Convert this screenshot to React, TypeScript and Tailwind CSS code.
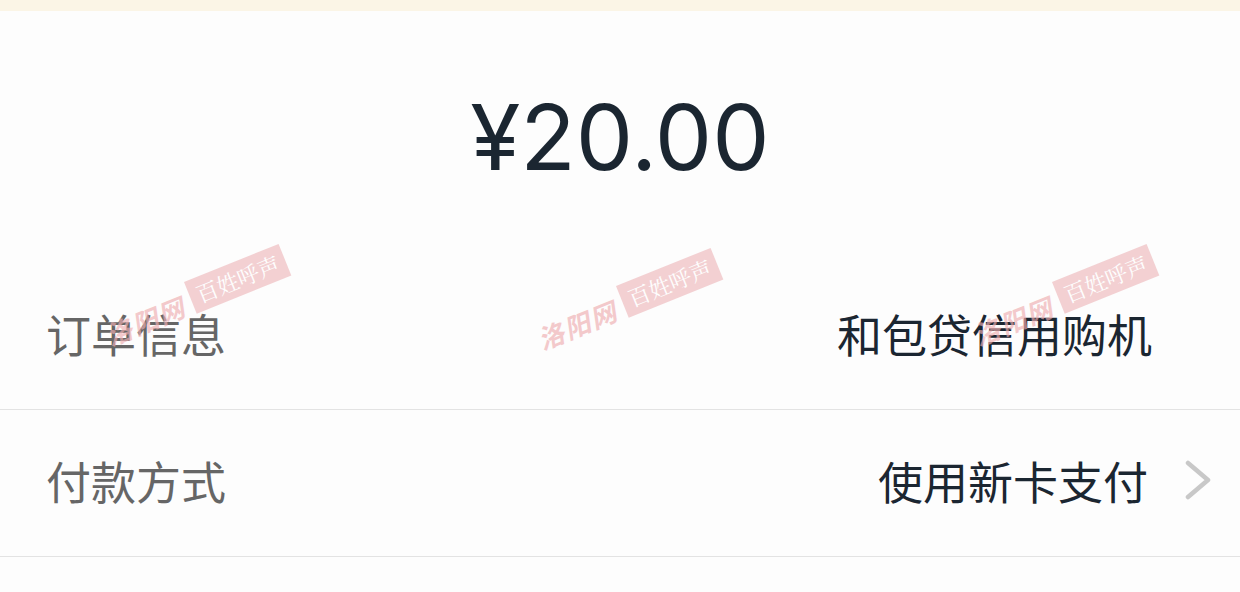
import React from "react";

const cjk = { fontFamily: '"Noto Sans CJK SC", "Noto Sans", sans-serif' };

const Watermark: React.FC<{ left: number; top: number }> = ({ left, top }) => {
    return (
        <div
            className="absolute flex items-end gap-2 pointer-events-none -rotate-[22deg] opacity-65"
            style={{ left, top }}
        >
            <span className="text-[26px] italic font-bold leading-none tracking-[2px] text-[#efaeb1]" style={cjk}>洛阳网</span>
            <span className="bg-[#eeb9bc] px-[7px] py-[6px] text-[22px] leading-none text-white" style={{ fontFamily: '"Noto Serif CJK SC", "Noto Sans CJK SC", serif' }}>百姓呼声</span>
        </div>
    );
};

const Row: React.FC<{ label: string; value: string; arrow?: boolean }> = ({ label, value, arrow }) => {
    return (
        <div className="flex h-[147px] items-center justify-between border-b border-[#e3e3e3] pb-[6px] pl-[46px] pr-[28px]" style={cjk}>
            <span className="text-[45px] leading-none text-[#666666]">{label}</span>
            <div className="flex items-center">
                <span className="text-[45px] leading-none text-[#1b2631]">{value}</span>
                <svg width="28" height="40" viewBox="0 0 28 40" className={arrow ? "ml-[36px]" : "ml-[32px] invisible"}>
                    <path d="M4 3 L24 20 L4 37" fill="none" stroke="#c8c8c8" strokeWidth="4.5" strokeLinecap="round" strokeLinejoin="round" />
                </svg>
            </div>
        </div>
    );
};

const App: React.FC = () => {
    return (
        <div className="relative h-[592px] w-[1240px] overflow-hidden bg-[#fdfdfd]">
            <div className="h-[11px] bg-[#fbf5e6]"></div>
            <div className="flex h-[252px] items-center justify-center">
                <span className="text-[91px] leading-none text-[#1b2631]" style={{ fontFamily: 'Inter, "Noto Sans", sans-serif' }}>¥20.00</span>
            </div>
            <Row label="订单信息" value="和包贷信用购机" />
            <Row label="付款方式" value="使用新卡支付" arrow />

            <Watermark left={98} top={279} />
            <Watermark left={530} top={283} />
            <Watermark left={966} top={279} />
        </div>
    );
};

export default App;
